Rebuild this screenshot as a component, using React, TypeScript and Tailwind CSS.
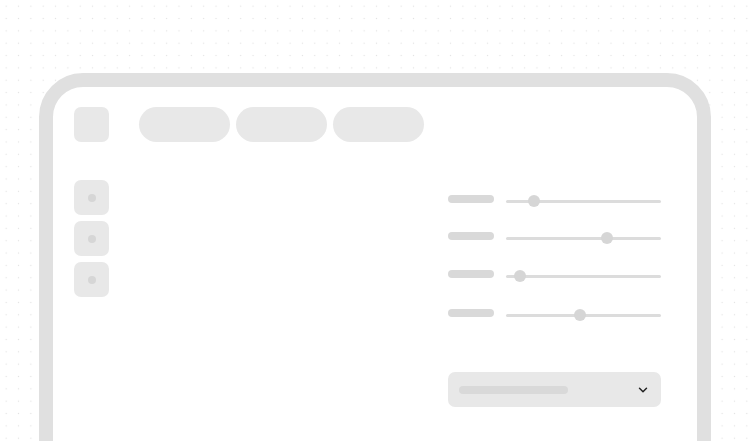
import { ChevronDown } from "lucide-react";

const sliders = [18, 65, 9, 48];
const rowGaps = ["mt-0", "mt-[25px]", "mt-[26px]", "mt-[27px]"];

const App = () => {
  return (
    <div
      className="h-[441px] w-[750px] overflow-hidden bg-white bg-[radial-gradient(circle,#e2e2e2_0.6px,transparent_1px)] bg-size-[12.35px_12.35px]"
      style={{ fontFamily: '"Liberation Sans", sans-serif' }}
    >
      {/* Device frame */}
      <div className="ml-[39px] mt-[73px] h-[420px] w-[672px] rounded-[44px] border-[14px] border-[#e0e0e0] bg-white pl-[21px] pr-[36px] pt-[20px]">
        {/* Top bar */}
        <div className="flex items-center">
          <div className="h-[35px] w-[35px] rounded-[7px] bg-[#e8e8e8]" />
          <div className="ml-[30px] flex gap-[6px]">
            <div className="h-[35px] w-[91px] rounded-full bg-[#e8e8e8]" />
            <div className="h-[35px] w-[91px] rounded-full bg-[#e8e8e8]" />
            <div className="h-[35px] w-[91px] rounded-full bg-[#e8e8e8]" />
          </div>
        </div>

        {/* Body */}
        <div className="mt-[38px] flex justify-between">
          {/* Sidebar */}
          <div className="flex flex-col gap-[6px]">
            {[0, 1, 2].map((i) => (
              <div key={i} className="flex h-[35px] w-[35px] items-center justify-center rounded-[7px] bg-[#e8e8e8]">
                <div className="h-[8px] w-[8px] rounded-full bg-[#d6d6d6]" />
              </div>
            ))}
          </div>

          {/* Controls */}
          <div className="w-[213px] pt-[15px]">
            {sliders.map((v, i) => (
              <div key={i} className={`flex items-start gap-[12px] ${rowGaps[i]}`}>
                <div className="h-[8px] w-[46px] rounded-full bg-[#d9d9d9]" />
                <div className="relative flex h-[12px] flex-1 items-center">
                  <div className="h-[3px] w-full rounded-full bg-[#dcdcdc]" />
                  <div
                    className="absolute top-0 h-[12px] w-[12px] -translate-x-1/2 rounded-full bg-[#d6d6d6]"
                    style={{ left: `${v}%` }}
                  />
                </div>
              </div>
            ))}

            <div className="mt-[51px] flex h-[35px] items-center justify-between rounded-[7px] bg-[#e8e8e8] pl-[11px] pr-[11px]">
              <div className="h-[8px] w-[109px] rounded-full bg-[#d9d9d9]" />
              <ChevronDown size={14} strokeWidth={2.5} className="text-[#222222]" />
            </div>
          </div>
        </div>
      </div>
    </div>
  );
};

export default App;
